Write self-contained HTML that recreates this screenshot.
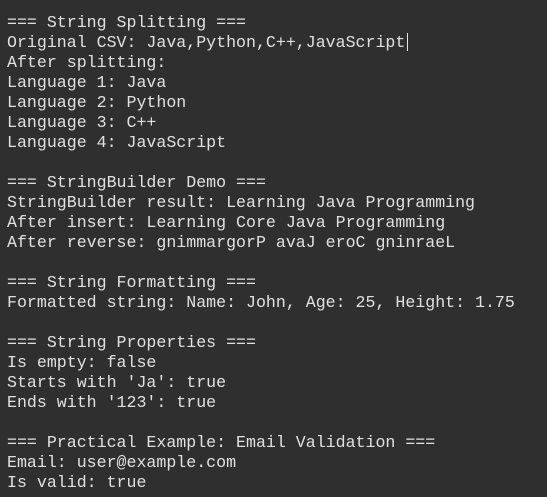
<!DOCTYPE html>
<html><head><style>
html,body{margin:0;padding:0;background:#2f2f2f;width:547px;height:497px;overflow:hidden}
pre{margin:0;position:absolute;left:7px;top:13px;font-family:"Liberation Mono",monospace;font-size:16.6px;line-height:20px;color:#e0e0e0}
.cur{position:absolute;left:407px;top:33px;width:1px;height:18px;background:#e6e6e6}
</style></head><body>
<pre>=== String Splitting ===
Original CSV: Java,Python,C++,JavaScript
After splitting:
Language 1: Java
Language 2: Python
Language 3: C++
Language 4: JavaScript

=== StringBuilder Demo ===
StringBuilder result: Learning Java Programming
After insert: Learning Core Java Programming
After reverse: gnimmargorP avaJ eroC gninraeL

=== String Formatting ===
Formatted string: Name: John, Age: 25, Height: 1.75

=== String Properties ===
Is empty: false
Starts with 'Ja': true
Ends with '123': true

=== Practical Example: Email Validation ===
Email: user@example.com
Is valid: true</pre>
<div class="cur"></div>
</body></html>
